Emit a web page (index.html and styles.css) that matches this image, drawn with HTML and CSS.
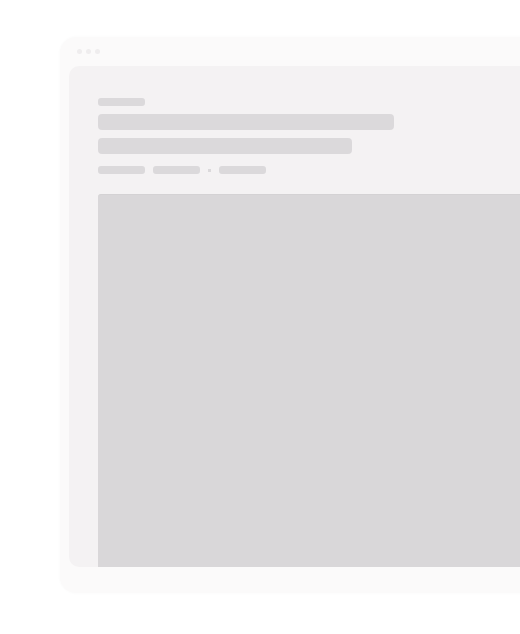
FILE: index.html
```html
<!DOCTYPE html>
<html lang="en">
<head>
<meta charset="utf-8">
<title>Loading</title>
<link rel="stylesheet" href="styles.css">
</head>
<body>
<div class="stage">
  <div class="frame">
    <div class="chrome">
      <span class="dot"></span><span class="dot"></span><span class="dot"></span>
    </div>
    <div class="panel">
      <div class="sk eyebrow"></div>
      <div class="sk title t1"></div>
      <div class="sk title t2"></div>
      <div class="meta">
        <div class="sk mbar"></div>
        <div class="sk mbar"></div>
        <span class="sep"></span>
        <div class="sk mbar"></div>
      </div>
      <div class="media"></div>
    </div>
  </div>
</div>
</body>
</html>
```
FILE: styles.css
```css
html, body {
  margin: 0;
  padding: 0;
  background: #ffffff;
  font-family: "Inter", "Liberation Sans", sans-serif;
}
.stage {
  width: 520px;
  height: 634px;
  overflow: hidden;
  padding: 37px 0 0 60px;
  box-sizing: border-box;
}
.frame {
  width: 520px;
  height: 556px;
  background: #fbfafa;
  border-radius: 16px;
  box-shadow: 0 0 3px rgba(0,0,0,0.03);
  display: flex;
  flex-direction: column;
  padding: 0 0 26px 9px;
  box-sizing: border-box;
}
.chrome {
  height: 29px;
  display: flex;
  align-items: center;
  gap: 4px;
  padding-left: 8px;
  padding-bottom: 1px;
  box-sizing: border-box;
}
.dot {
  width: 5px;
  height: 5px;
  border-radius: 50%;
  background: #efedee;
}
.panel {
  flex: 1;
  background: #f4f2f3;
  border-radius: 10px 0 0 10px;
  overflow: hidden;
  padding: 32px 0 0 29px;
  display: flex;
  flex-direction: column;
  box-sizing: border-box;
}
.sk {
  background: #dbd9db;
  border-radius: 3px;
}
.eyebrow {
  width: 47px;
  height: 8px;
  margin-bottom: 8px;
}
.title {
  height: 16px;
  border-radius: 4px;
}
.t1 { width: 296px; margin-bottom: 8px; }
.t2 { width: 254px; margin-bottom: 12px; }
.meta {
  display: flex;
  align-items: center;
  gap: 8px;
  height: 8px;
  margin-bottom: 20px;
}
.mbar {
  width: 47px;
  height: 8px;
}
.sep {
  width: 3px;
  height: 3px;
  background: #dbd9db;
}
.media {
  flex: 1;
  background: #d9d7d9;
  border-radius: 3px 0 0 0;
  border-top: 1px solid #d4d2d4;
}
```
